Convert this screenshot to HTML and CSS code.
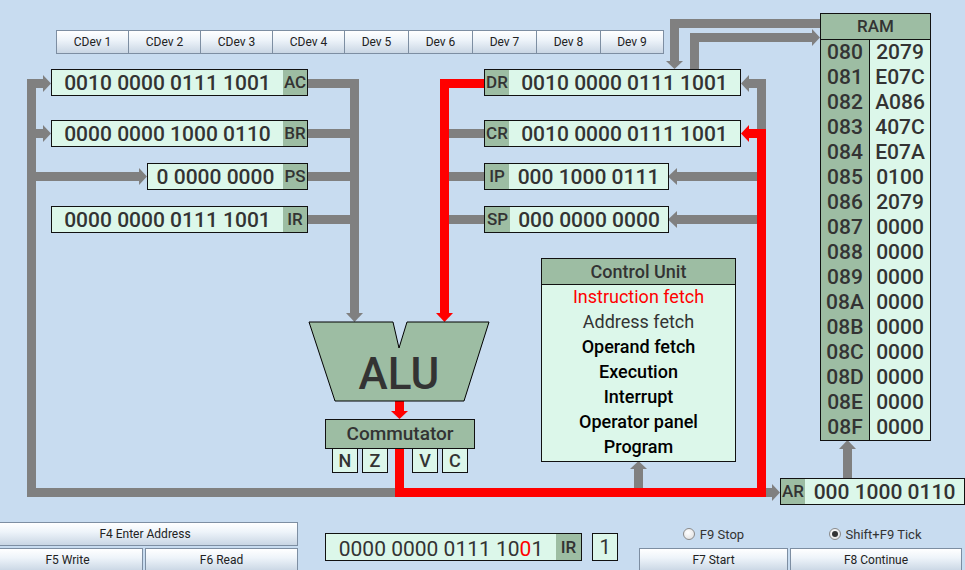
FILE: index.html
```html
<!DOCTYPE html>
<html lang="en">
<head>
    <meta charset="UTF-8">
    <title>BComp</title>
    <link rel="stylesheet" href="styles.css">
</head>
<body>
<div class="board">

    <!-- buses -->
    <svg class="buses" width="965" height="570" viewBox="0 0 965 570">
        <g fill="none" stroke="#808080" stroke-width="9" stroke-linejoin="miter">
            <polyline points="43,83.5 31.5,83.5 31.5,492.5 396,492.5"/>
            <line x1="36" y1="133.5" x2="43" y2="133.5"/>
            <line x1="36" y1="176.5" x2="139" y2="176.5"/>
            <polyline points="307,83.5 354.5,83.5 354.5,313"/>
            <line x1="307" y1="133.5" x2="351" y2="133.5"/>
            <line x1="307" y1="176.5" x2="351" y2="176.5"/>
            <line x1="307" y1="219.5" x2="351" y2="219.5"/>
            <line x1="449" y1="133.5" x2="484" y2="133.5"/>
            <line x1="449" y1="176.5" x2="484" y2="176.5"/>
            <line x1="449" y1="219.5" x2="484" y2="219.5"/>
            <polyline points="820,23.5 674.5,23.5 674.5,61"/>
            <polyline points="694.5,69 694.5,37.5 812,37.5"/>
            <polyline points="761.5,133 761.5,83.5 749,83.5"/>
            <line x1="760" y1="176.5" x2="677" y2="176.5"/>
            <line x1="760" y1="219.5" x2="677" y2="219.5"/>
            <line x1="765" y1="492.5" x2="772" y2="492.5"/>
            <line x1="638.5" y1="488" x2="638.5" y2="469"/>
            <line x1="847.5" y1="478" x2="847.5" y2="449"/>
        </g>
        <g fill="#808080">
            <polygon points="43,75 51,83.5 43,92"/>
            <polygon points="43,125 51,133.5 43,142"/>
            <polygon points="139,168 147,176.5 139,185"/>
            <polygon points="346,313 363,313 354.5,322"/>
            <polygon points="666,61 683,61 674.5,69"/>
            <polygon points="812,29 820,37.5 812,46"/>
            <polygon points="749,75 741,83.5 749,92"/>
            <polygon points="677,168 668,176.5 677,185"/>
            <polygon points="677,211 668,219.5 677,228"/>
            <polygon points="772,484 780,492.5 772,501"/>
            <polygon points="630,469 647,469 638.5,461"/>
            <polygon points="839,449 856,449 847.5,440"/>
        </g>
        <g fill="none" stroke="#ff0000" stroke-width="9" stroke-linejoin="miter">
            <polyline points="484,83.5 444.5,83.5 444.5,313"/>
            <polyline points="399.5,448 399.5,492.5 761.5,492.5 761.5,133.5 749,133.5"/>
            <line x1="399.5" y1="401" x2="399.5" y2="411"/>
        </g>
        <g fill="#ff0000">
            <polygon points="436,313 453,313 444.5,322"/>
            <polygon points="749,125 741,133.5 749,142"/>
            <polygon points="391,411 408,411 399.5,419"/>
        </g>
        <polygon class="alu" points="309,322 393,322 399,348 407,322 489,322 464,401 335,401"/>
        <text class="alu-text" x="399" y="389" text-anchor="middle">ALU</text>
    </svg>

    <!-- device buttons -->
    <div class="devices">
        <button class="btn cdev">CDev 1</button>
        <button class="btn cdev">CDev 2</button>
        <button class="btn cdev">CDev 3</button>
        <button class="btn cdev">CDev 4</button>
        <button class="btn dev">Dev 5</button>
        <button class="btn dev">Dev 6</button>
        <button class="btn dev">Dev 7</button>
        <button class="btn dev">Dev 8</button>
        <button class="btn dev dev-last">Dev 9</button>
    </div>

    <!-- left registers -->
    <div class="reg node" id="ac"><span class="val">0010 0000 0111 1001</span><span class="tag">AC</span></div>
    <div class="reg node" id="br"><span class="val">0000 0000 1000 0110</span><span class="tag">BR</span></div>
    <div class="reg node" id="ps"><span class="val">0 0000 0000</span><span class="tag">PS</span></div>
    <div class="reg node" id="ir"><span class="val">0000 0000 0111 1001</span><span class="tag">IR</span></div>

    <!-- right registers -->
    <div class="reg node" id="dr"><span class="tag">DR</span><span class="val">0010 0000 0111 1001</span></div>
    <div class="reg node" id="cr"><span class="tag">CR</span><span class="val">0010 0000 0111 1001</span></div>
    <div class="reg node" id="ip"><span class="tag">IP</span><span class="val">000 1000 0111</span></div>
    <div class="reg node" id="sp"><span class="tag">SP</span><span class="val">000 0000 0000</span></div>
    <div class="reg node" id="ar"><span class="tag">AR</span><span class="val">000 1000 0110</span></div>

    <!-- memory -->
    <div class="ram node">
        <div class="ram-head">RAM</div>
        <div class="ram-body">
            <div class="ram-addr">
                <span>080</span><span>081</span><span>082</span><span>083</span>
                <span>084</span><span>085</span><span>086</span><span>087</span>
                <span>088</span><span>089</span><span>08A</span><span>08B</span>
                <span>08C</span><span>08D</span><span>08E</span><span>08F</span>
            </div>
            <div class="ram-data">
                <span>2079</span><span>E07C</span><span>A086</span><span>407C</span>
                <span>E07A</span><span>0100</span><span>2079</span><span>0000</span>
                <span>0000</span><span>0000</span><span>0000</span><span>0000</span>
                <span>0000</span><span>0000</span><span>0000</span><span>0000</span>
            </div>
        </div>
    </div>

    <!-- control unit -->
    <div class="cu node">
        <div class="cu-head">Control Unit</div>
        <ul class="cu-list">
            <li class="active">Instruction fetch</li>
            <li class="idle">Address fetch</li>
            <li>Operand fetch</li>
            <li>Execution</li>
            <li>Interrupt</li>
            <li>Operator panel</li>
            <li>Program</li>
        </ul>
    </div>

    <!-- commutator + flags -->
    <div class="comm node">Commutator</div>
    <div class="flag node" id="fn">N</div>
    <div class="flag node" id="fz">Z</div>
    <div class="flag node" id="fv">V</div>
    <div class="flag node" id="fc">C</div>

    <!-- bottom controls -->
    <div class="controls">
        <div class="keys">
            <button class="btn key-wide">F4 Enter Address</button>
            <div class="key-row">
                <button class="btn key-write">F5 Write</button>
                <button class="btn key-read">F6 Read</button>
            </div>
        </div>

        <div class="input-panel">
            <div class="reg input-reg">
                <span class="val plain">0000 0000 0111 10<em>0</em>1</span><span class="tag">IR</span>
            </div>
            <div class="bit">1</div>
        </div>

        <div class="run-panel">
            <div class="radios">
                <label class="radio radio-stop"><i class="dot"></i>F9 Stop</label>
                <label class="radio radio-tick"><i class="dot checked"></i>Shift+F9 Tick</label>
            </div>
            <div class="key-row">
                <button class="btn key-start">F7 Start</button>
                <button class="btn key-cont">F8 Continue</button>
            </div>
        </div>
    </div>
</div>
</body>
</html>
```

FILE: styles.css
```css
body {
    margin: 0;
    font-family: Roboto, "Liberation Sans", sans-serif;
    background: #c8dcf0;
    color: #333;
}

.board {
    position: relative;
    width: 965px;
    height: 570px;
    overflow: hidden;
    display: flex;
    flex-direction: column;
}

.buses {
    position: absolute;
    left: 0;
    top: 0;
}

.alu {
    fill: #9dbda3;
    stroke: #000;
    stroke-width: 1;
}

.alu-text {
    font-family: Roboto, sans-serif;
    font-size: 44px;
    font-weight: 500;
    fill: #333;
}

/* buttons */
.btn {
    box-sizing: border-box;
    height: 24px;
    margin: 0;
    padding: 0;
    font-family: Roboto, "Liberation Sans", sans-serif;
    font-size: 12px;
    color: #222;
    border: 1px solid #7d8ea2;
    background: linear-gradient(#ffffff 0%, #eef4fa 40%, #c9d6e4 100%);
}

.devices {
    display: flex;
    margin: 30px 0 0 56px;
    position: relative;
}

.devices .btn {
    margin-right: -1px;
}

.cdev { width: 73px; }
.dev { width: 65px; }
.dev-last { width: 64px; margin-right: 0; }

/* diagram nodes */
.node {
    position: absolute;
}

.reg {
    box-sizing: border-box;
    display: flex;
    height: 27px;
    border: 1px solid #111;
    background: #dcf7ea;
}

.reg .val {
    flex: 1;
    text-align: center;
    font-size: 21px;
    font-weight: 500;
    line-height: 26px;
}

.reg .tag {
    width: 24px;
    background: #9dbda3;
    text-align: center;
    font-size: 17px;
    font-weight: 500;
    line-height: 25px;
}

#ac { left: 51px; top: 69px; width: 257px; }
#br { left: 51px; top: 120px; width: 257px; }
#ps { left: 147px; top: 163px; width: 161px; }
#ir { left: 51px; top: 206px; width: 257px; }

#dr { left: 484px; top: 69px; width: 257px; }
#cr { left: 484px; top: 120px; width: 257px; }
#ip { left: 484px; top: 163px; width: 185px; }
#sp { left: 484px; top: 206px; width: 185px; }
#sp .tag { width: 25px; }
#ar { left: 780px; top: 478px; width: 185px; }

/* memory */
.ram {
    box-sizing: border-box;
    left: 820px;
    top: 13px;
    width: 111px;
    border: 1px solid #111;
}

.ram-head {
    height: 25px;
    line-height: 25px;
    text-align: center;
    font-size: 17px;
    font-weight: 500;
    background: #9dbda3;
    border-bottom: 1px solid #111;
}

.ram-body {
    display: flex;
}

.ram-addr,
.ram-data {
    display: flex;
    flex-direction: column;
    font-size: 21px;
    font-weight: 500;
    text-align: center;
}

.ram-addr span,
.ram-data span {
    height: 25px;
    line-height: 25px;
}

.ram-addr {
    width: 48px;
    background: #9dbda3;
    border-right: 1px solid #111;
}

.ram-data {
    flex: 1;
    background: #dcf7ea;
}

/* control unit */
.cu {
    box-sizing: border-box;
    left: 541px;
    top: 258px;
    width: 195px;
    height: 204px;
    border: 1px solid #111;
    background: #dcf7ea;
}

.cu-head {
    height: 25px;
    line-height: 25px;
    text-align: center;
    font-size: 18px;
    font-weight: 500;
    background: #9dbda3;
    border-bottom: 1px solid #111;
}

.cu-list {
    list-style: none;
    margin: 0;
    padding: 0;
    text-align: center;
    font-size: 18px;
    font-weight: 500;
    color: #000;
}

.cu-list li {
    height: 25px;
    line-height: 24px;
}

.cu-list .active {
    color: #ff0000;
    font-weight: 400;
}

.cu-list .idle {
    color: #333;
    font-weight: 400;
}

/* commutator */
.comm {
    box-sizing: border-box;
    left: 325px;
    top: 419px;
    width: 150px;
    height: 30px;
    border: 1px solid #111;
    background: #9dbda3;
    text-align: center;
    font-size: 19px;
    font-weight: 500;
    line-height: 28px;
}

.flag {
    box-sizing: border-box;
    top: 448px;
    width: 26px;
    height: 25px;
    border: 1px solid #111;
    background: #dcf7ea;
    text-align: center;
    font-size: 18px;
    font-weight: 500;
    line-height: 23px;
}

#fn { left: 332px; }
#fz { left: 362px; }
#fv { left: 412px; }
#fc { left: 442px; }

/* bottom controls */
.controls {
    margin-top: auto;
    margin-bottom: -2px;
    display: flex;
    align-items: flex-start;
    position: relative;
}

.keys {
    width: 306px;
    margin-left: -8px;
    display: flex;
    flex-direction: column;
    gap: 2px;
}

.key-wide { width: 306px; }

.key-row {
    display: flex;
    gap: 2px;
}

.key-write { width: 151px; }
.key-read { width: 153px; }

.input-panel {
    display: flex;
    gap: 10px;
    margin: 11px 0 0 27px;
}

.input-reg {
    width: 257px;
    height: 28px;
}

.input-reg .val.plain {
    font-weight: 400;
    font-size: 21px;
    line-height: 30px;
}

.input-reg .tag {
    width: 25px;
    line-height: 26px;
}

.input-reg em {
    font-style: normal;
    color: #ff0000;
}

.bit {
    box-sizing: border-box;
    width: 26px;
    height: 28px;
    border: 1px solid #111;
    background: #dcf7ea;
    text-align: center;
    font-size: 20px;
    line-height: 26px;
}

.run-panel {
    margin-left: 21px;
    width: 323px;
}

.radios {
    display: flex;
    height: 24px;
    margin-bottom: 2px;
}

.radio {
    display: flex;
    align-items: center;
    justify-content: center;
    gap: 5px;
    font-size: 13px;
    color: #333;
}

.radio-stop { width: 149px; }
.radio-tick { width: 174px; }

.dot {
    box-sizing: border-box;
    width: 12px;
    height: 12px;
    border-radius: 50%;
    border: 1px solid #8a8a8a;
    background: radial-gradient(circle at 40% 35%, #ffffff, #dcdcdc);
    position: relative;
}

.dot.checked::after {
    content: "";
    position: absolute;
    left: 2px;
    top: 2px;
    width: 6px;
    height: 6px;
    border-radius: 50%;
    background: #333;
}

.key-start { width: 149px; }
.key-cont { width: 172px; }
```
